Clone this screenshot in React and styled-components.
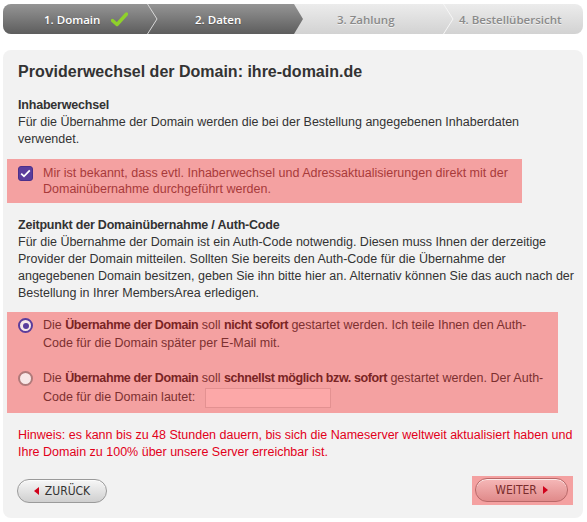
import styled, { createGlobalStyle } from "styled-components"

const Global = createGlobalStyle`
  html, body { margin: 0; padding: 0; background: #ffffff; }
  body { font-family: "Liberation Sans", Arial, sans-serif; }
  * { box-sizing: border-box; }
`

const Page = styled.div`
  width: 587px;
  padding: 4px 4px 0 3px;
`

const StepBar = styled.div`
  display: flex;
  height: 30px;
  border-radius: 8px;
  overflow: hidden;
  background: linear-gradient(#ececec, #d2d2d2);
`

const DoneGroup = styled.div`
  display: flex;
  flex: none;
  width: 300px;
  margin-right: -9px;
  background: linear-gradient(#959595, #5d5d5d);
  clip-path: polygon(0 0, calc(100% - 9px) 0, 100% 50%, calc(100% - 9px) 100%, 0 100%);
`

const Step = styled.div`
  flex: ${(p) => (p.$w ? "none" : "1")};
  width: ${(p) => (p.$w ? `${p.$w}px` : "auto")};
  display: flex;
  align-items: center;
  gap: 11px;
  font-family: "Open Sans", sans-serif;
  font-weight: 600;
  font-size: 11.5px;
  color: ${(p) => (p.$done ? "#ffffff" : "#8a8a8a")};
  text-shadow: ${(p) => (p.$done ? "0 1px 1px rgba(0,0,0,0.25)" : "0 1px 0 rgba(255,255,255,0.6)")};
  padding-left: ${(p) => p.$pad || 0}px;
  white-space: nowrap;
`

const Sep = ({ light }) => (
  <svg width="11" height="30" viewBox="0 0 11 30" style={{ flex: "none" }}>
    <polyline points="0.5,0 10,15 0.5,30" fill="none" stroke={light ? "#f6f6f6" : "#d8d8d8"} strokeWidth="1" />
  </svg>
)

const Check = () => (
  <svg width="17" height="15" viewBox="0 0 17 15">
    <path d="M1.5 8.5 L6 12.5 L15.5 2" fill="none" stroke="#8fd12a" strokeWidth="3.4" strokeLinecap="round" strokeLinejoin="round" />
  </svg>
)

const Card = styled.div`
  margin-top: 16px;
  background: #f2f2f2;
  border-radius: 8px;
  padding: 12px 11px 13px 4px;
  color: #333333;
  font-size: 12.5px;
  line-height: 17px;
  white-space: nowrap;
`

const Title = styled.h1`
  margin: 0 0 15px 11px;
  font-size: 16px;
  line-height: 20px;
  font-weight: bold;
  color: #333333;
`

const Section = styled.div`
  margin: ${(p) => p.$mt || 0}px 0 0 11px;
  color: ${(p) => p.$color || "#333333"};
  line-height: ${(p) => p.$lh || 17}px;
`

const Label = styled.div`
  font-weight: bold;
  letter-spacing: -0.2px;
`

const Highlight = styled.div`
  margin-top: ${(p) => p.$mt}px;
  width: ${(p) => p.$w}px;
  background: #f4a1a1;
  padding: ${(p) => p.$pad};
  display: flex;
  flex-direction: column;
  gap: ${(p) => p.$gap || 0}px;
`

const Option = styled.label`
  display: flex;
  gap: 10px;
  align-items: flex-start;
  color: ${(p) => p.$color};
  line-height: ${(p) => p.$lh || 17}px;
  b { color: #7a2424; letter-spacing: -0.4px; }
`

const Box = styled.span`
  flex: none;
  width: 15px;
  height: 15px;
  margin-top: ${(p) => p.$mt || 1}px;
  border-radius: ${(p) => (p.$round ? "50%" : "3px")};
  display: flex;
  align-items: center;
  justify-content: center;
  background: ${(p) => (p.$round ? "#f8e8e8" : "#5a3d9c")};
  border: ${(p) => (p.$round ? `2px solid ${p.$on ? "#5a3d9c" : "#b07a7a"}` : "1px solid #4b2f8a")};
`

const Dot = styled.span`
  width: 6px;
  height: 6px;
  border-radius: 50%;
  background: #5a3d9c;
`

const CodeInput = styled.span`
  display: inline-block;
  width: 126px;
  height: 20px;
  vertical-align: middle;
  margin-left: 6px;
  background: #fca8a8;
  border: 1px solid #e39191;
`

const Actions = styled.div`
  margin: 15px 0 0 10px;
  display: flex;
  justify-content: space-between;
  align-items: center;
`

const BtnWrap = styled.div`
  padding: ${(p) => (p.$hl ? "2px 5px 3px 3px" : "0")};
  background: ${(p) => (p.$hl ? "#f4a1a1" : "transparent")};
  margin-right: ${(p) => (p.$hl ? -1 : 0)}px;
`

const Button = styled.button`
  height: 24px;
  width: ${(p) => p.$w}px;
  border-radius: 12px;
  border: 1px solid ${(p) => (p.$hl ? "#b96868" : "#9a9a9a")};
  background: ${(p) =>
    p.$hl ? "linear-gradient(#f6b8b8, #e08a8a)" : "linear-gradient(#f7f7f7, #cfcfcf)"};
  display: flex;
  align-items: center;
  justify-content: center;
  gap: 6px;
  font-family: "DejaVu Sans Condensed", "DejaVu Sans", sans-serif;
  font-stretch: condensed;
  font-size: 12px;
  color: ${(p) => (p.$hl ? "#7a2c2c" : "#333333")};
  padding: 0;
  box-shadow: inset 0 1px 0 rgba(255,255,255,0.7);
  cursor: pointer;
`

const Tri = ({ dir }) => (
  <svg width="5" height="8" viewBox="0 0 5 8">
    <polygon points={dir === "left" ? "5,0 0,4 5,8" : "0,0 5,4 0,8"} fill="#d0021b" />
  </svg>
)

export default function App() {
  return (
    <Page>
      <Global />
      <StepBar>
        <DoneGroup>
          <Step $done $w={144} $pad={41}>
            1. Domain <Check />
          </Step>
          <Sep />
          <Step $done $pad={37}>2. Daten</Step>
        </DoneGroup>
        <Step $w={149} $pad={43}>3. Zahlung</Step>
        <Sep light />
        <Step $pad={5}>4. Bestellübersicht</Step>
      </StepBar>

      <Card>
        <Title>Providerwechsel der Domain: ihre-domain.de</Title>
        <Section>
          <Label>Inhaberwechsel</Label>
          Für die Übernahme der Domain werden die bei der Bestellung angegebenen Inhaberdaten
          <br />
          verwendet.
        </Section>

        <Highlight $mt={11} $w={515} $pad="6px 11px 6px 11px">
          <Option $color="#a83a3a" $lh={16}>
            <Box>
              <svg width="11" height="9" viewBox="0 0 11 9">
                <path d="M1.2 4.6 L4 7.3 L9.8 1.3" fill="none" stroke="#ffffff" strokeWidth="1.8" />
              </svg>
            </Box>
            <span>
              Mir ist bekannt, dass evtl. Inhaberwechsel und Adressaktualisierungen direkt mit der
              <br />
              Domainübernahme durchgeführt werden.
            </span>
          </Option>
        </Highlight>

        <Section $mt={14}>
          <Label>Zeitpunkt der Domainübernahme / Auth-Code</Label>
          Für die Übernahme der Domain ist ein Auth-Code notwendig. Diesen muss Ihnen der derzeitige
          <br />
          Provider der Domain mitteilen. Sollten Sie bereits den Auth-Code für die Übernahme der
          <br />
          angegebenen Domain besitzen, geben Sie ihn bitte hier an. Alternativ können Sie das auch nach der
          <br />
          Bestellung in Ihrer MembersArea erledigen.
        </Section>

        <Highlight $mt={10} $w={551} $pad="4px 11px 5px 11px" $gap={17}>
          <Option $color="#7d3030" $lh={18}>
            <Box $round $on $mt={2}>
              <Dot />
            </Box>
            <span>
              Die <b>Übernahme der Domain</b> soll <b>nicht sofort</b> gestartet werden. Ich teile Ihnen den Auth-
              <br />
              Code für die Domain später per E-Mail mit.
            </span>
          </Option>
          <Option $color="#7d3030" $lh={19}>
            <Box $round $mt={2} />
            <span>
              Die <b>Übernahme der Domain</b> soll <b>schnellst möglich bzw. sofort</b> gestartet werden. Der Auth-
              <br />
              Code für die Domain lautet: <CodeInput />
            </span>
          </Option>
        </Highlight>

        <Section $mt={14} $color="#e2001a">
          Hinweis: es kann bis zu 48 Stunden dauern, bis sich die Nameserver weltweit aktualisiert haben und
          <br />
          Ihre Domain zu 100% über unsere Server erreichbar ist.
        </Section>

        <Actions>
          <BtnWrap>
            <Button $w={90}>
              <Tri dir="left" /> ZURÜCK
            </Button>
          </BtnWrap>
          <BtnWrap $hl>
            <Button $hl $w={93}>
              WEITER <Tri />
            </Button>
          </BtnWrap>
        </Actions>
      </Card>
    </Page>
  )
}
